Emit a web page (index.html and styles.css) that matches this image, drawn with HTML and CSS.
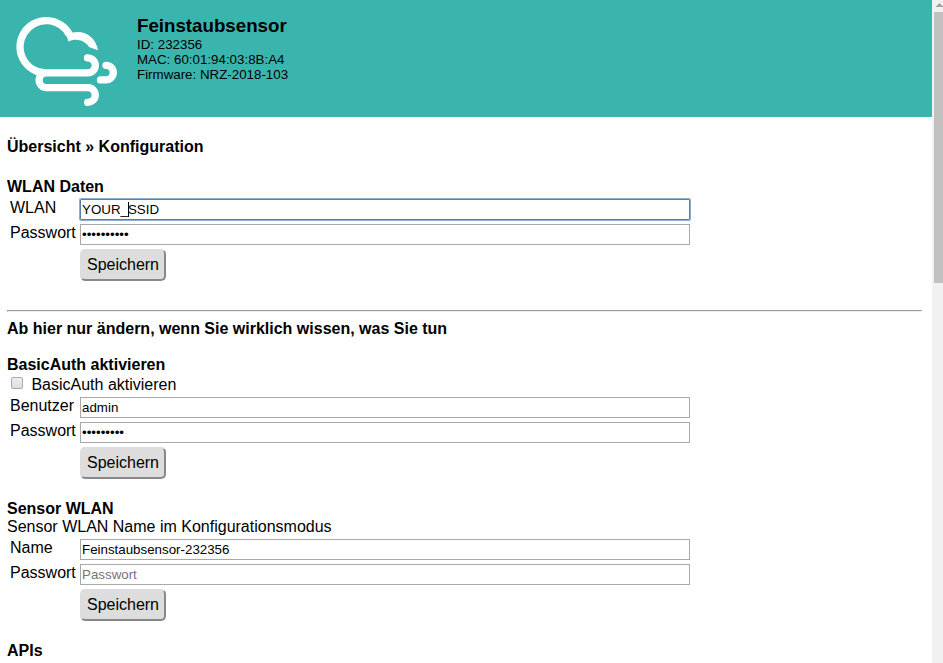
FILE: index.html
```html
<!DOCTYPE html>
<html lang="de">
<head>
<meta charset="utf-8">
<title>Feinstaubsensor</title>
<link rel="stylesheet" href="styles.css">
</head>
<body>
<div class="page">
  <header class="header">
    <svg class="logo" viewBox="0 0 130 117" width="130" height="117" fill="none" stroke="#fff" stroke-width="7.3" stroke-linecap="round">
      <path stroke-linecap="butt" d="M45 73A26.200 26.200 0 1 1 69.500 34.800"/>
      <path stroke="none" fill="#fff" d="M66 33L72.500 32.600C84 29.500 96 37 98 50.200L89 46.900C85 40.500 76 37.600 68.300 41.600Z"/>
      <path d="M87.500 57.800A7.500 7.500 0 0 1 88 72.900H46.500a7.400 7.400 0 0 0 0 14.800H88.300A7.300 7.300 0 0 1 87.600 102.300"/>
      <path d="M106 65.300a7.300 7.300 0 0 1 0 14.600H100.500"/>
    </svg>
    <div class="info">
      <h1>Feinstaubsensor</h1>
      <p>ID: 232356</p>
      <p>MAC: 60:01:94:03:8B:A4</p>
      <p>Firmware: NRZ-2018-103</p>
    </div>
  </header>
  <main class="content">
    <h2 class="crumbs">Übersicht » Konfiguration</h2>
    <section class="section">
      <h2>WLAN Daten</h2>
      <div class="form">
        <span>WLAN</span><div class="field focused">YOUR_<i class="caret"></i>SSID</div>
        <span>Passwort</span><div class="field">••••••••••</div>
        <button>Speichern</button>
      </div>
    </section>
    <hr>
    <h2 class="warning">Ab hier nur ändern, wenn Sie wirklich wissen, was Sie tun</h2>
    <section class="section">
      <h2>BasicAuth aktivieren</h2>
      <label class="check"><span class="box"></span>BasicAuth aktivieren</label>
      <div class="form">
        <span>Benutzer</span><div class="field">admin</div>
        <span>Passwort</span><div class="field">•••••••••</div>
        <button>Speichern</button>
      </div>
    </section>
    <section class="section">
      <h2>Sensor WLAN</h2>
      <p>Sensor WLAN Name im Konfigurationsmodus</p>
      <div class="form">
        <span>Name</span><div class="field">Feinstaubsensor-232356</div>
        <span>Passwort</span><div class="field placeholder">Passwort</div>
        <button>Speichern</button>
      </div>
    </section>
    <h2>APIs</h2>
  </main>
</div>
<div class="scrollbar">
  <svg width="11" height="12" shape-rendering="crispEdges"><path fill="#a3a3a3" d="M3 7L7 3L11 7Z"/></svg>
  <div class="thumb"></div>
</div>
</body>
</html>
```
FILE: styles.css
```css
* { box-sizing: border-box; }
body {
  margin: 0;
  display: flex;
  height: 663px;
  overflow: hidden;
  background: #fff;
  color: #000;
  font: 16px/18px "Liberation Sans", Arial, sans-serif;
}
h1, h2, p { margin: 0; }
h2 { font-size: 16px; line-height: 18px; }
.page { flex: 1; }
.header { display: flex; height: 117px; background: #3ab5ae; }
.logo { flex: none; }
.info { padding: 15px 0 0 7px; font-size: 13.33px; line-height: 15px; }
.info h1 { font-size: 18.72px; line-height: 22px; }
.content { padding: 21px 10px 0 7px; }
.crumbs { margin-bottom: 22px; }
.section { margin-bottom: 21px; }
.form {
  display: grid;
  grid-template-columns: 70px 610px;
  grid-template-rows: 25px 25px 32px;
  padding: 3px 0 0 3px;
}
.field {
  height: 21px;
  padding: 0 1px;
  border: 1px solid #a9a9a9;
  font-size: 13.33px;
  line-height: 19px;
  white-space: nowrap;
}
.focused { border-color: #5b7fa3; box-shadow: 0 0 0 1px #8aafd0; border-radius: 1px; }
.caret { display: inline-block; width: 1px; height: 15px; margin-right: -1px; background: #000; vertical-align: -3px; }
.placeholder { color: #757575; }
button {
  grid-column: 2;
  width: 86px;
  height: 32px;
  padding: 0;
  border: 2px solid;
  border-color: #ddd #888 #888 #ddd;
  border-radius: 5px;
  background: #ddd;
  color: #000;
  font: inherit;
}
hr { margin: 29px 0 8px; border: 1px solid; border-color: #999 #eee #eee #999; }
.warning { margin-bottom: 18px; }
.check { display: flex; height: 20px; padding: 2px 0 0 4px; }
.box {
  width: 12px;
  height: 12px;
  margin: 1px 8.400px 0 0;
  border: 1px solid #aaa;
  border-radius: 2px;
  background: linear-gradient(#eee, #ddd);
}
.scrollbar { width: 11px; background: #f1f1f1; }
.scrollbar svg { display: block; }
.thumb { height: 271px; margin-left: 2px; background: #c1c1c1; }
```
